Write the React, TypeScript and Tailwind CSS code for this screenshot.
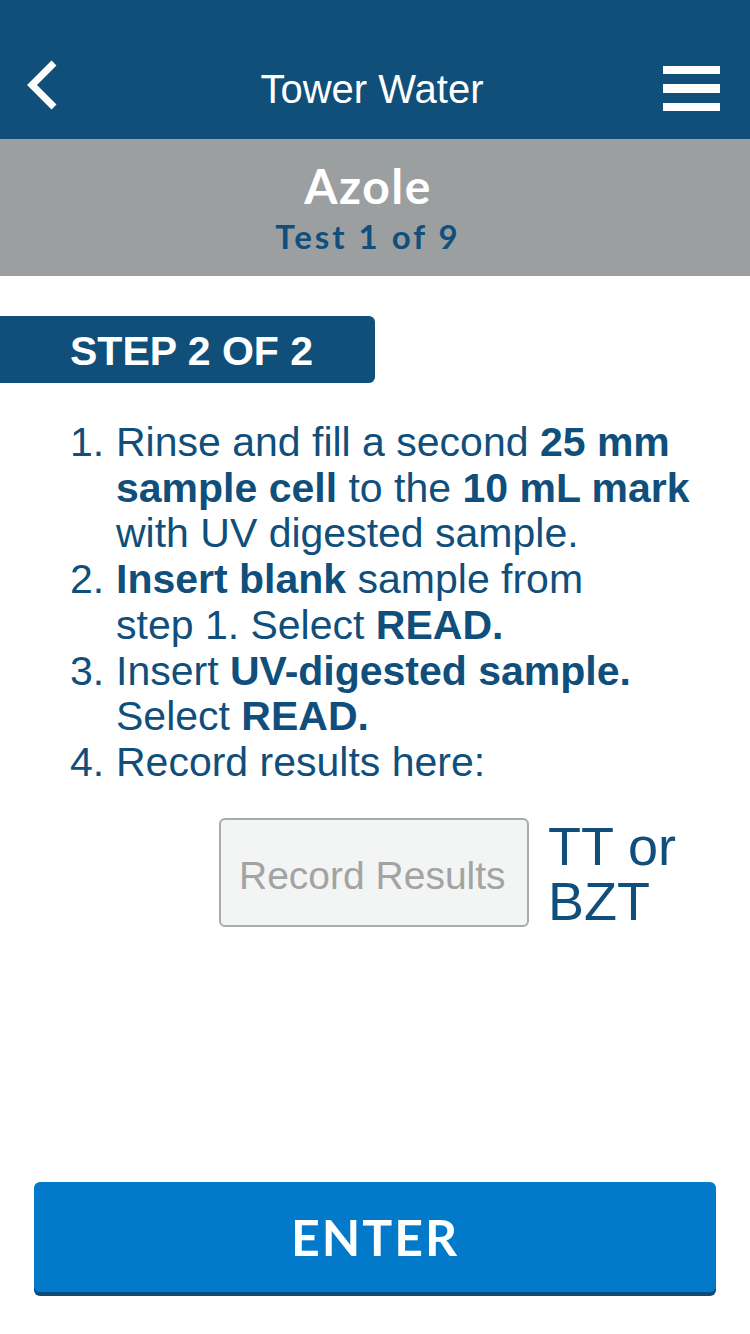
import React from "react";

const arial = { fontFamily: '"Liberation Sans", Arial, sans-serif' };

function BackIcon() {
  return (
    <svg width="36" height="50" viewBox="0 0 36 50" className="mb-[7px]">
      <polyline points="30,3 8,25 30,47" fill="none" stroke="white" strokeWidth="7" strokeLinecap="butt" strokeLinejoin="miter" />
    </svg>
  );
}

function MenuIcon() {
  return (
    <div className="flex flex-col gap-[10px] w-[57px]">
      <span className="block h-[8.5px] bg-white" />
      <span className="block h-[8.5px] bg-white" />
      <span className="block h-[8.5px] bg-white" />
    </div>
  );
}

export default function App() {
  const blue = "text-[#104f7b]";
  return (
    <div className="w-[750px] min-h-[1334px] bg-white flex flex-col font-['Liberation_Sans',Arial,sans-serif]">
      {/* top bar */}
      <header className="h-[139px] bg-[#0f4f7a] flex items-center pt-[38px] pl-[24px] pr-[30px]">
        <div className="w-[120px] flex">
          <BackIcon />
        </div>
        <h1 className="flex-1 text-center text-white text-[40px] leading-none font-normal" style={arial}>
          Tower Water
        </h1>
        <div className="w-[120px] flex justify-end">
          <MenuIcon />
        </div>
      </header>

      {/* test title band */}
      <section className="h-[137px] bg-[#9b9fa0] flex flex-col items-center pt-[23px] pr-[14px] gap-[10px] font-['Lato',sans-serif] font-bold">
        <div className="text-white text-[48px] leading-none tracking-[1.5px]">Azole</div>
        <div className="text-[#104f7b] text-[33px] leading-none tracking-[3px]">Test 1 of 9</div>
      </section>

      {/* step badge */}
      <div className="mt-[40px] w-[375px] h-[67px] bg-[#0f4f7a] rounded-r-[6px] flex items-center pl-[70px] pt-[4px]">
        <span className="text-white text-[41px] leading-none font-bold">STEP 2 OF 2</span>
      </div>

      {/* instructions */}
      <ol className={`mt-[37px] pl-[70px] text-[41px] leading-[45.7px] ${blue}`}>
        <li className="flex">
          <span className="w-[46px] shrink-0">1.</span>
          <span>
            Rinse and fill a second <b>25 mm</b>
            <br />
            <b>sample cell</b> to the <b>10 mL mark</b>
            <br />
            with UV digested sample.
          </span>
        </li>
        <li className="flex">
          <span className="w-[46px] shrink-0">2.</span>
          <span>
            <b>Insert blank</b> sample from
            <br />
            step 1. Select <b>READ.</b>
          </span>
        </li>
        <li className="flex">
          <span className="w-[46px] shrink-0">3.</span>
          <span>
            Insert <b>UV-digested sample.</b>
            <br />
            Select <b>READ.</b>
          </span>
        </li>
        <li className="flex">
          <span className="w-[46px] shrink-0">4.</span>
          <span>Record results here:</span>
        </li>
      </ol>

      {/* result entry */}
      <div className="mt-[32px] flex items-start pl-[219px] gap-[19px]">
        <input
          type="text"
          placeholder="Record Results"
          className="w-[310px] h-[109px] rounded-[6px] border-2 border-[#a9abab] bg-[#f3f4f4] px-[18px] pt-[8px] text-[39px] text-[#555] placeholder:text-[#a3a3a3] outline-none"
        />
        <div className={`pt-[1px] text-[54px] leading-[55px] ${blue}`}>
          TT or
          <br />
          BZT
        </div>
      </div>

      <div className="flex-1" />

      <button className="mx-[34px] mb-[42px] h-[110px] rounded-[6px] bg-[#0279c9] shadow-[0_4px_0_#0d4b78] flex items-center justify-center text-white font-['Lato',sans-serif] font-bold text-[50px] tracking-[2px] leading-none">
        ENTER
      </button>
    </div>
  );
}
